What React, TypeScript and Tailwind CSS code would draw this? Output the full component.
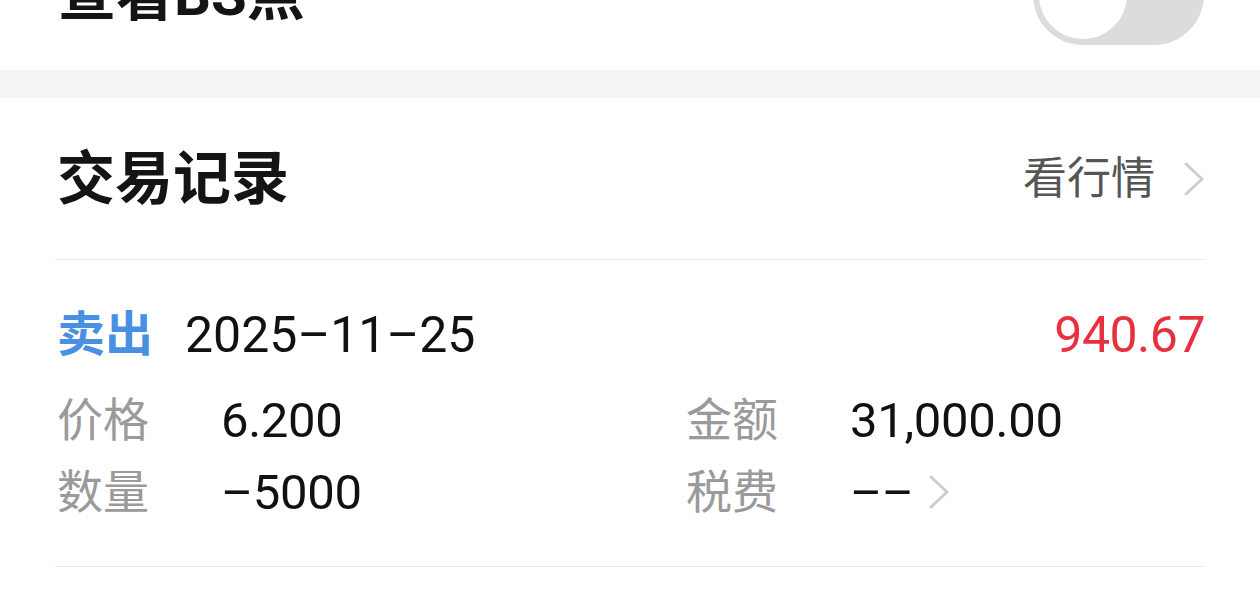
const font = { fontFamily: 'Roboto, "Noto Sans CJK SC", sans-serif' };

function Chevron({ className }: { className?: string }) {
  return (
    <svg viewBox="0 0 22 34" className={className} fill="none">
      <polyline points="3,2 19,17 3,32" stroke="#cccccc" strokeWidth="3" strokeLinecap="round" strokeLinejoin="round" />
    </svg>
  );
}

function Field({ label, value, arrow }: { label: string; value: string; arrow?: boolean }) {
  return (
    <div className="flex items-center h-[72px]">
      <span className="w-[164px] text-[46px] text-[#9a9a9a] leading-none">{label}</span>
      <span className="text-[49px] text-[#111] leading-none tracking-[-0.3px]">{value}</span>
      {arrow && <Chevron className="w-[22px] h-[36px] ml-[14px]" />}
    </div>
  );
}

export default function App() {
  return (
    <div className="w-[1260px] h-[616px] overflow-hidden bg-white" style={font}>
      {/* BS toggle row, mostly scrolled out of view */}
      <div className="mt-[-80px] h-[150px] flex items-center justify-between pl-[58px] pr-[56px]">
        <span className="text-[58px] font-bold text-[#141414] leading-none">查看BS点</span>
        <div className="w-[171px] h-[100px] rounded-full bg-[#dcdcdc] flex items-center px-[6px]">
          <div className="w-[88px] h-[88px] rounded-full bg-white" />
        </div>
      </div>

      <div className="h-[28px] bg-[#f4f4f4]" />

      <div className="px-[55px]">
        {/* header */}
        <div className="h-[162px] flex items-center justify-between border-b border-[#ebebeb]">
          <span className="pl-[2px] text-[58px] font-bold text-[#141414] leading-none">交易记录</span>
          <div className="flex items-center gap-[28px]">
            <span className="text-[44px] text-[#555] leading-none">看行情</span>
            <Chevron className="w-[22px] h-[34px]" />
          </div>
        </div>

        {/* trade record */}
        <div className="pt-[45px] pb-[38px] border-b border-[#ebebeb]">
          <div className="flex items-center justify-between h-[60px]">
            <div className="flex items-center gap-[32px] pl-[2px]">
              <span className="text-[48px] font-bold text-[#4a90e2] leading-none">卖出</span>
              <span className="text-[50px] text-[#111] leading-none">2025–11–25</span>
            </div>
            <span className="text-[50px] text-[#e8313f] leading-none tracking-[-0.5px]">940.67</span>
          </div>
          <div className="mt-[19px] grid grid-cols-[629px_1fr] pl-[2px]">
            <Field label="价格" value="6.200" />
            <Field label="金额" value="31,000.00" />
            <Field label="数量" value="–5000" />
            <Field label="税费" value="––" arrow />
          </div>
        </div>
      </div>
    </div>
  );
}
